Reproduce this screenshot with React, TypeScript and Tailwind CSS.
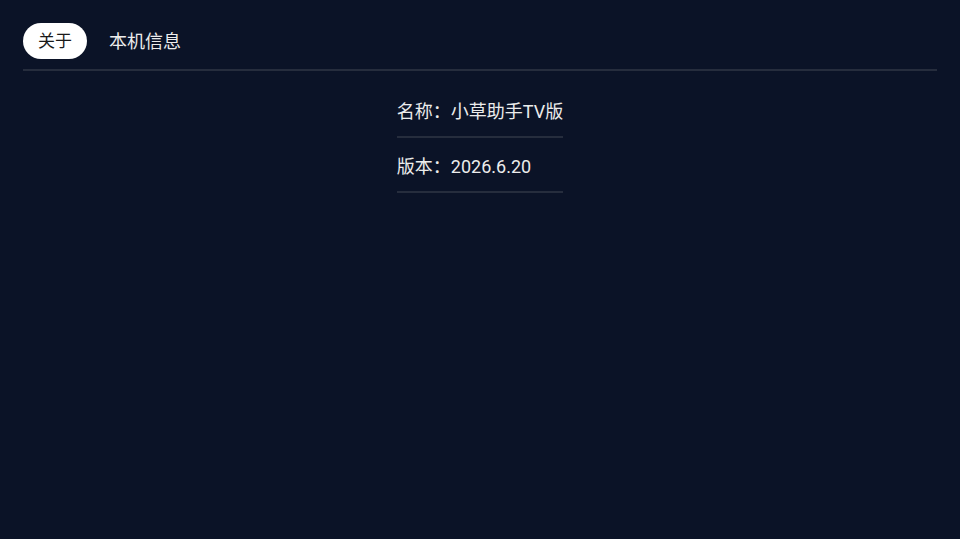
const font = { fontFamily: 'Roboto, "Noto Sans CJK SC", sans-serif' };

const tabs = ["关于", "本机信息"];

const rows = [
  { label: "名称", value: "小草助手TV版" },
  { label: "版本", value: "2026.6.20" },
];

export default function App() {
  const active = 0;

  return (
    <div className="h-[539px] w-[960px] bg-[#0b1327] text-[#ececec]" style={font}>
      <div className="px-[23px] pt-[23px]">
        <div className="flex items-center gap-[7px]">
          {tabs.map((t, i) => (
            <div
              key={t}
              className={
                i === active
                  ? "flex h-[36px] items-center rounded-full bg-white px-[15px] pt-[1px] text-[17px] text-[#1a1a1a]"
                  : "flex h-[36px] items-center rounded-full px-[15px] pt-[1px] text-[18px] text-[#ececec]"
              }
            >
              {t}
            </div>
          ))}
        </div>
        <div className="mt-[10px] h-[2px] w-full bg-[#262d3d]" />
      </div>

      <div className="mt-[12px] flex justify-center">
        <div className="flex flex-col">
          {rows.map((r) => (
            <div
              key={r.label}
              className="flex h-[55px] items-center border-b-2 border-[#262d3d] pt-[3px] text-[18px]"
            >
              {r.label}：{r.value}
            </div>
          ))}
        </div>
      </div>
    </div>
  );
}
